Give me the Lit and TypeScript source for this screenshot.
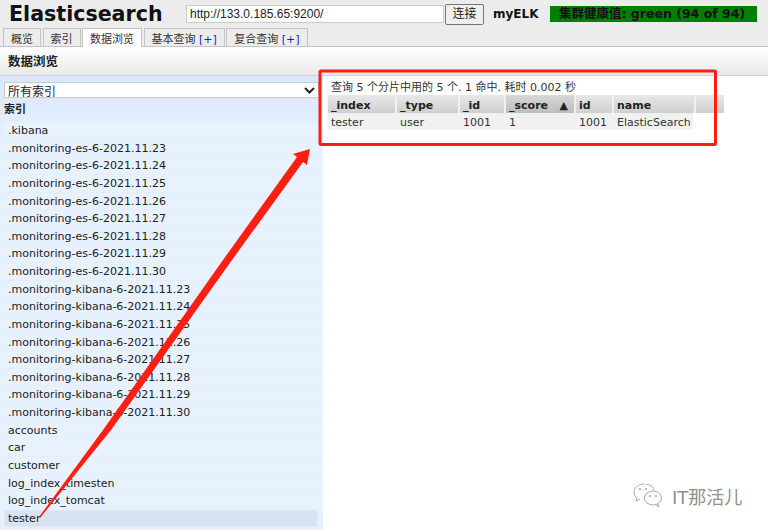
import { LitElement, html, css } from "lit";
import { customElement } from "lit/decorators.js";

const DATES = ["23", "24", "25", "26", "27", "28", "29", "30"];
const INDICES = [
  ".kibana",
  ...DATES.map((d) => `.monitoring-es-6-2021.11.${d}`),
  ...DATES.map((d) => `.monitoring-kibana-6-2021.11.${d}`),
  "accounts",
  "car",
  "customer",
  "log_index_timesten",
  "log_index_tomcat",
  "tester",
];

const TABS = [
  { label: "概览" },
  { label: "索引" },
  { label: "数据浏览", active: true },
  { label: "基本查询", plus: true },
  { label: "复合查询", plus: true },
];

const COLUMNS = [
  { name: "_index", width: 69 },
  { name: "_type", width: 63 },
  { name: "_id", width: 46 },
  { name: "_score", width: 70, sorted: true },
  { name: "id", width: 38 },
  { name: "name", width: 82 },
];

const ROW = ["tester", "user", "1001", "1", "1001", "ElasticSearch"];

@customElement("app-root")
export class AppRoot extends LitElement {
  static styles = css`
    :host {
      display: block;
      position: relative;
      width: 768px;
      height: 530px;
      overflow: hidden;
      background: #fff;
      color: #222;
      font-family: "DejaVu Sans", "Noto Sans CJK SC", sans-serif;
      font-size: 11px;
    }
    .header {
      height: 47px;
      box-sizing: border-box;
      background: #ececec;
      border-bottom: 1px solid #c4c4c4;
      display: flex;
      flex-direction: column;
    }
    .top {
      height: 29px;
      display: flex;
      align-items: center;
      padding-left: 9px;
    }
    h1 {
      margin: 0;
      width: 177px;
      font-size: 20.6px;
      font-weight: bold;
      color: #111;
      white-space: nowrap;
    }
    .url {
      width: 258px;
      height: 18px;
      box-sizing: border-box;
      background: #fff;
      border: 1px solid #ccc;
      font-family: "Liberation Sans", sans-serif;
      font-size: 12px;
      line-height: 16px;
      padding-left: 3px;
      color: #222;
    }
    .connect {
      width: 39px;
      height: 21px;
      box-sizing: border-box;
      margin-left: 1px;
      border: 1px solid #777;
      border-radius: 2px;
      background: #efefef;
      font-size: 12px;
      text-align: center;
      line-height: 19px;
    }
    .cluster {
      width: 57px;
      margin-left: 9px;
      font-size: 12px;
      font-weight: bold;
      color: #111;
    }
    .health {
      width: 207px;
      height: 16px;
      background: #008000;
      color: #111;
      font-size: 12.5px;
      font-weight: bold;
      line-height: 16px;
      padding-left: 9px;
      box-sizing: border-box;
      white-space: nowrap;
    }
    .tabs {
      display: flex;
      gap: 1.5px;
      padding-left: 3px;
      height: 18px;
    }
    .tab {
      height: 18px;
      box-sizing: border-box;
      border: 1px solid #c4c4c4;
      border-bottom: none;
      padding: 0 7px;
      line-height: 21px;
      background: #ececec;
      color: #333;
      white-space: nowrap;
    }
    .tab.active {
      height: 19px;
      background: #fff;
      position: relative;
    }
    .plus {
      color: #1a1ae0;
    }
    .title {
      height: 29px;
      box-sizing: border-box;
      background: linear-gradient(#fff, #e9e9e9);
      border-bottom: 1px solid #d2d2d2;
      padding-left: 8px;
      font-size: 12.5px;
      font-weight: bold;
      line-height: 29px;
      color: #222;
    }
    .body {
      display: flex;
      height: 454px;
    }
    .side {
      width: 323px;
      flex: none;
      box-sizing: border-box;
      padding: 6px 0 0 0;
      background: linear-gradient(#d9e6fb, #e6f0ff 60px);
    }
    .select {
      margin: 0 4px;
      height: 16px;
      box-sizing: border-box;
      background: #fff;
      border: 1px solid #ccc;
      display: flex;
      align-items: center;
      justify-content: space-between;
      padding: 0 3px;
      font-size: 12px;
      color: #222;
    }
    .side-title {
      font-weight: bold;
      padding-left: 4px;
      height: 24px;
      line-height: 24px;
      color: #222;
    }
    .idx {
      height: 17.64px;
      box-sizing: border-box;
      margin-left: 4px;
      padding-left: 4px;
      line-height: 17px;
      border-radius: 3px;
      background: #e8f1fe;
      border-bottom: 1px solid #e3edfd;
      white-space: nowrap;
      color: #222;
    }
    .idx.sel {
      background: #d8e2f0;
      border: 1px solid #e2e8f2;
      margin-right: 5px;
      padding-left: 3px;
      line-height: 16px;
    }
    .main {
      flex: 1;
      padding: 5px 0 0 5px;
    }
    .summary {
      height: 14px;
      line-height: 14px;
      padding-left: 3px;
      color: #333;
      font-size: 11px;
    }
    .tr {
      display: flex;
    }
    .th {
      height: 18px;
      box-sizing: border-box;
      background: linear-gradient(#e8e8e8, #cfcfcf);
      border-right: 2px solid #f0f0f0;
      padding-left: 3px;
      font-weight: bold;
      line-height: 21px;
      color: #222;
      white-space: nowrap;
      display: flex;
      justify-content: space-between;
    }
    .th.sorted {
      background: linear-gradient(#d8d8d8, #bdbdbd);
      padding-right: 6px;
    }
    .th.rest {
      width: 28px;
      border-right: none;
    }
    .td {
      height: 17px;
      box-sizing: border-box;
      background: #f1f1f1;
      padding-left: 3px;
      line-height: 19px;
      color: #333;
      white-space: nowrap;
    }
    .overlay {
      position: absolute;
      left: 0;
      top: 0;
      pointer-events: none;
    }
    .brand {
      position: absolute;
      left: 633px;
      top: 483px;
      display: flex;
      align-items: center;
      gap: 9px;
      color: #909090;
      font-size: 18px;
      line-height: 26px;
    }
    .brand span {
      position: relative;
      top: 2px;
    }
  `;

  render() {
    return html`
      <div class="header">
        <div class="top">
          <h1>Elasticsearch</h1>
          <div class="url">http://133.0.185.65:9200/</div>
          <div class="connect">连接</div>
          <div class="cluster">myELK</div>
          <div class="health">集群健康值: green (94 of 94)</div>
        </div>
        <div class="tabs">
          ${TABS.map(
            (t) => html`<div class="tab ${t.active ? "active" : ""}">
              ${t.label}${t.plus ? html` <span class="plus">[+]</span>` : ""}
            </div>`
          )}
        </div>
      </div>
      <div class="title">数据浏览</div>
      <div class="body">
        <div class="side">
          <div class="select">
            <span>所有索引</span>
            <svg width="11" height="7" viewBox="0 0 11 7">
              <path d="M1 1l4.5 4.5L10 1" fill="none" stroke="#222" stroke-width="2" />
            </svg>
          </div>
          <div class="side-title">索引</div>
          ${INDICES.map(
            (name) => html`<div class="idx ${name === "tester" ? "sel" : ""}">${name}</div>`
          )}
        </div>
        <div class="main">
          <div class="summary">查询 5 个分片中用的 5 个. 1 命中. 耗时 0.002 秒</div>
          <div class="tr">
            ${COLUMNS.map(
              (c) => html`<div class="th ${c.sorted ? "sorted" : ""}" style="width:${c.width}px">
                <span>${c.name}</span>${c.sorted ? html`<span>▲</span>` : ""}
              </div>`
            )}
            <div class="th rest"></div>
          </div>
          <div class="tr">
            ${ROW.map(
              (v, i) => html`<div class="td" style="width:${i === 5 ? 79 : COLUMNS[i].width}px">${v}</div>`
            )}
          </div>
        </div>
      </div>
      <svg class="overlay" width="768" height="530" viewBox="0 0 768 530">
        <rect x="320" y="71" width="395.500" height="73.500" rx="1" fill="none" stroke="#ff1e12" stroke-width="3" />
        <path d="M40 518L111 430L232 260L303 162L307 165L310 149L293 154L297 157L223 260L103 430L39 517Z" fill="#ff1e12" />
      </svg>
      <div class="brand">
        <svg width="30" height="26" viewBox="0 0 30 26" fill="none" stroke="#aaa" stroke-width="1">
          <path d="M11 1C5 1 1 5 1 9c0 3 1.500 5 3 6l-1 3 4-2" />
          <path d="M13 1c4 .5 7 3 8 6" />
          <ellipse cx="20" cy="15" rx="8.500" ry="7" />
          <path d="M25 21l1 3-3-2" />
          <circle cx="7" cy="6" r=".8" />
          <circle cx="13" cy="6" r=".8" />
          <circle cx="17" cy="13" r=".8" />
          <circle cx="23" cy="13" r=".8" />
        </svg>
        <span>IT那活儿</span>
      </div>
    `;
  }
}
